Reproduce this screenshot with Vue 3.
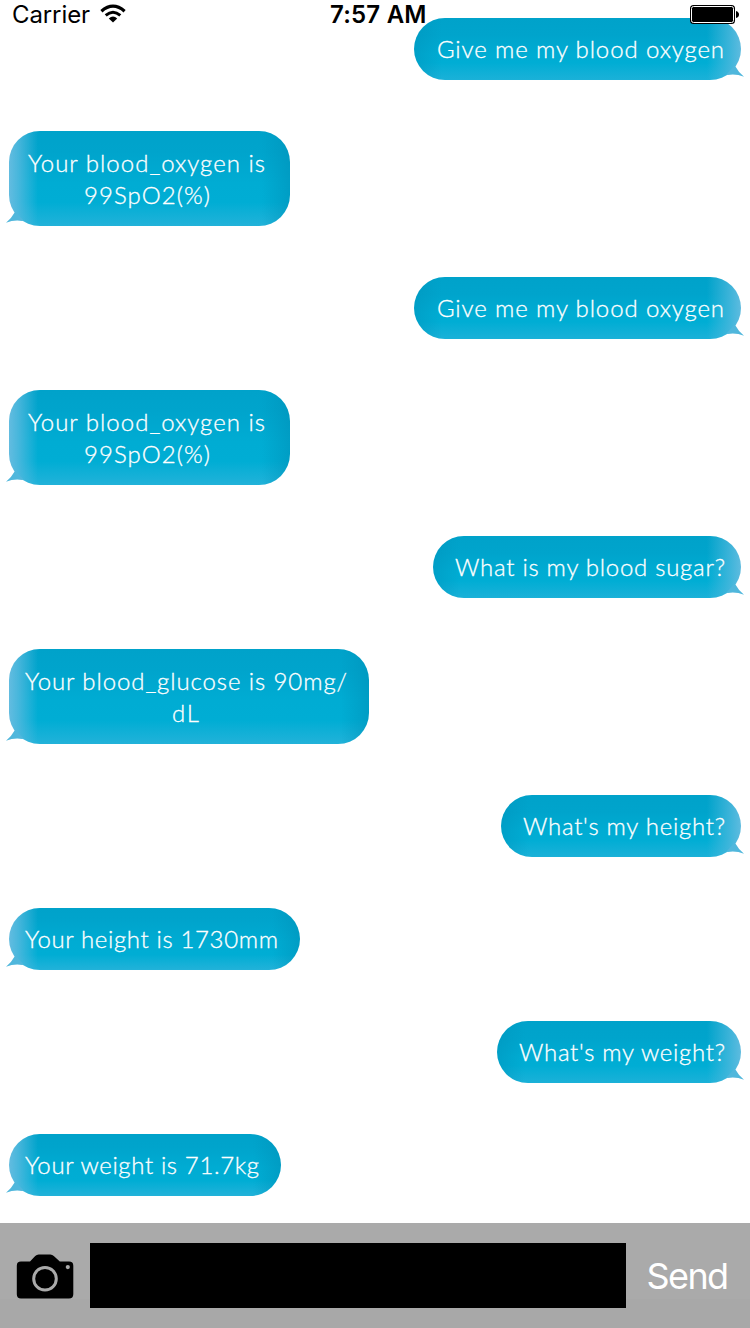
<script setup>
const messages = [
  { side: 'right', width: 327, lines: [{ text: 'Give me my blood oxygen', width: 287 }] },
  { side: 'left', width: 281, lines: [{ text: 'Your blood_oxygen is', width: 237 }, { text: '99SpO2(%)', width: 126 }] },
  { side: 'right', width: 327, lines: [{ text: 'Give me my blood oxygen', width: 287 }] },
  { side: 'left', width: 281, lines: [{ text: 'Your blood_oxygen is', width: 237 }, { text: '99SpO2(%)', width: 126 }] },
  { side: 'right', width: 308, lines: [{ text: 'What is my blood sugar?', width: 270 }] },
  { side: 'left', width: 360, wide: true, lines: [{ text: 'Your blood_glucose is 90mg/', width: 322 }, { text: 'dL', width: 27 }] },
  { side: 'right', width: 240, lines: [{ text: "What's my height?", width: 202 }] },
  { side: 'left', width: 291, wide: true, lines: [{ text: 'Your height is 1730mm', width: 253 }] },
  { side: 'right', width: 244, lines: [{ text: "What's my weight?", width: 206 }] },
  { side: 'left', width: 272, wide: true, lines: [{ text: 'Your weight is 71.7kg', width: 234 }] }
]
</script>

<template>
  <main class="screen">
    <header class="status">
      <span class="carrier">Carrier</span>
      <svg class="wifi" width="26" height="20" viewBox="0 0 26 20">
        <path d="M1.4 7.2Q13-2.8 24.6 7.2" fill="none" stroke="#000" stroke-width="3.2" />
        <path d="M5.7 11.4Q13 5.2 20.3 11.4" fill="none" stroke="#000" stroke-width="3" />
        <path d="M8.8 14.4Q13 10.4 17.2 14.4L13 18.6Z" />
      </svg>
      <span class="time">7:57 AM</span>
      <svg class="battery" width="50" height="20" viewBox="0 0 50 20">
        <rect x="0" y="0" width="45" height="19" rx="3.5" fill="#000" />
        <rect x="1.5" y="1.5" width="42" height="16" rx="2" fill="none" stroke="#fff" stroke-width="1" />
        <path d="M46 6Q49 7 49 9.5Q49 12 46 13Z" />
      </svg>
    </header>

    <section class="chat">
      <div
        v-for="(m, i) in messages"
        :key="i"
        class="bubble"
        :class="[m.side, { wide: m.wide, double: m.lines.length > 1 }]"
        :style="{ width: m.width + 'px' }"
      >
        <svg class="tail" width="18" height="15" viewBox="0 0 18 15">
          <path d="M8.6 1.6Q5.5 7.5 0 11.7Q8 8.7 16.2 10L17.5 9.5L10 1Z" />
        </svg>
        <svg
          v-for="line in m.lines"
          :key="line.text"
          class="line"
          :width="line.width"
          height="32"
        >
          <text x="0" y="24" :textLength="line.width" lengthAdjust="spacing">{{ line.text }}</text>
        </svg>
      </div>
    </section>

    <footer class="composer">
      <svg class="camera" width="58" height="46" viewBox="0 0 58 46">
        <path d="M5 8.5H14L19.2 3.1Q20.7 1.5 22.7 1.5H34.3Q36.3 1.5 37.8 3.1L43.8 8.5H53Q57.3 8.5 57.3 12.7V41.2Q57.3 45.4 53 45.4H5Q.8 45.4 .8 41.2V12.7Q.8 8.5 5 8.5Z" />
        <circle cx="29" cy="25.8" r="11.3" fill="none" stroke="#aaa" stroke-width="3" />
        <circle cx="51.8" cy="14.1" r="2.1" fill="#aaa" />
      </svg>
      <div class="field"></div>
      <span class="send">Send</span>
    </footer>
  </main>
</template>

<style>
body {
  margin: 0;
  background: #fff;
}
</style>

<style scoped>
.screen {
  position: relative;
  width: 750px;
  height: 1328px;
  display: flex;
  flex-direction: column;
  overflow: hidden;
  background: #fff;
}

.status {
  position: absolute;
  z-index: 2;
  inset: 0 0 auto;
  height: 28px;
  display: flex;
  align-items: flex-start;
  font: 24px/30px Inter, "Liberation Sans", sans-serif;
  color: #000;
}

.carrier {
  margin-left: 12px;
  width: 87.5px;
  letter-spacing: -0.1px;
}

.wifi {
  margin-top: 4px;
}

.time {
  margin-left: 204.5px;
  width: 360px;
  font-weight: 600;
  letter-spacing: 0.2px;
}

.battery {
  margin-top: 5px;
}

.chat {
  flex: 1;
  display: flex;
  flex-direction: column;
  gap: 51px;
  padding: 18px 9px 0;
}

.bubble {
  position: relative;
  box-sizing: border-box;
  display: flex;
  flex-direction: column;
  align-items: center;
  padding: 16px 0 14px;
  border-radius: 31px;
}

.bubble.double {
  padding-top: 17px;
}

.line {
  flex: none;
  overflow: visible;
  fill: #fff;
  stroke: #fff;
  stroke-width: 0.3px;
  font: 300 24px Lato, "Open Sans", sans-serif;
}

.left {
  align-self: flex-start;
  padding-right: 6px;
  background:
    linear-gradient(90deg, #63bce0 0, rgba(85, 185, 222, 0.85) 9px, rgba(50, 180, 217, 0) 29px),
    linear-gradient(270deg, rgba(0, 145, 184, 0.55), rgba(0, 155, 195, 0) 28px),
    linear-gradient(#00a2ca 0, #00a4cc 22%, #00acd3 55%, #00add4 75%, #22b2d9 100%);
}

.left.wide {
  padding-right: 7px;
}

.right {
  align-self: flex-end;
  padding-left: 5px;
  background:
    linear-gradient(270deg, #5ebbdf 0, rgba(80, 184, 221, 0.8) 10px, rgba(50, 180, 217, 0) 34px),
    linear-gradient(90deg, rgba(0, 148, 188, 0.5), rgba(0, 155, 195, 0) 28px),
    linear-gradient(#00a2ca 0, #00a4cc 28%, #00acd3 58%, #00add4 72%, #1bb1d8 100%);
}

.tail {
  position: absolute;
  left: -3px;
  bottom: 0;
  fill: #50b7dc;
}

.right .tail {
  left: auto;
  right: -3px;
  transform: scaleX(-1);
}

.composer {
  height: 105px;
  display: flex;
  align-items: center;
  background: linear-gradient(#aaa 76px, #a8a8a8 76px);
}

.camera {
  margin-left: 16px;
}

.field {
  width: 536px;
  height: 65px;
  margin-left: 16px;
  background: #000;
}

.send {
  margin-left: 20.5px;
  font: 36px/44px Inter, "Liberation Sans", sans-serif;
  letter-spacing: -1.6px;
  color: #fff;
}
</style>
